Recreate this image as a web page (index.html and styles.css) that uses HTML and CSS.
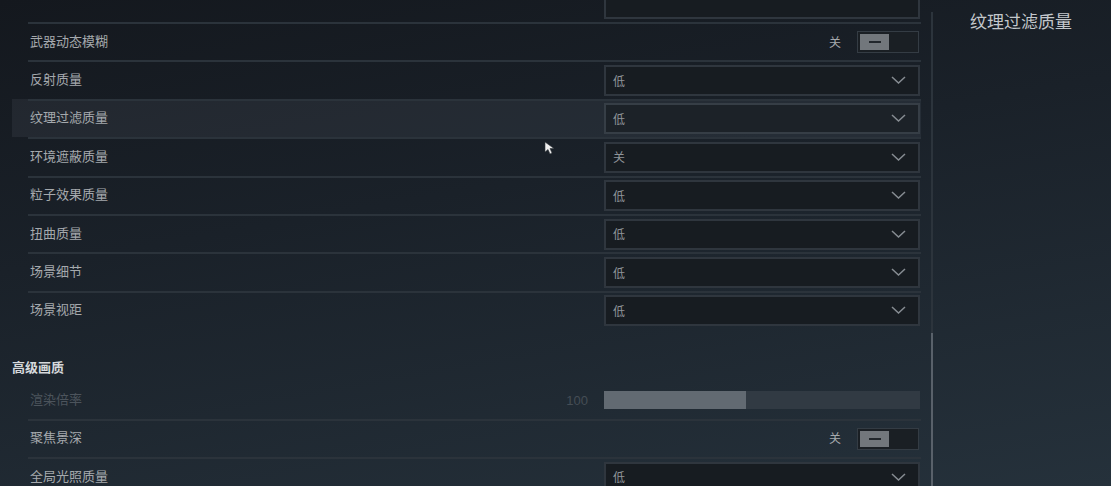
FILE: index.html
```html
<!DOCTYPE html>
<html lang="zh-CN">
<head>
    <meta charset="UTF-8">
    <title>画质设置</title>
    <link rel="stylesheet" href="styles.css">
</head>
<body>
    <div class="page">
        <div class="settings">
            <div class="list">
                <div class="row"><div class="row-inner"><span class="label"></span>
                    <div class="select"></div>
                </div></div>

                <div class="row"><div class="row-inner"><span class="label">武器动态模糊</span>
                    <div class="switch-wrap"><span class="switch-text">关</span><div class="switch"><div class="knob"><i></i></div></div></div>
                </div></div>

                <div class="row"><div class="row-inner"><span class="label">反射质量</span>
                    <div class="select"><span>低</span><svg class="chev" width="15" height="8" viewBox="0 0 15 8"><polyline points="1,1 7.5,7 14,1"/></svg></div>
                </div></div>

                <div class="row active"><div class="row-inner"><span class="label">纹理过滤质量</span>
                    <div class="select"><span>低</span><svg class="chev" width="15" height="8" viewBox="0 0 15 8"><polyline points="1,1 7.5,7 14,1"/></svg></div>
                </div></div>

                <div class="row"><div class="row-inner"><span class="label">环境遮蔽质量</span>
                    <div class="select"><span>关</span><svg class="chev" width="15" height="8" viewBox="0 0 15 8"><polyline points="1,1 7.5,7 14,1"/></svg></div>
                </div></div>

                <div class="row"><div class="row-inner"><span class="label">粒子效果质量</span>
                    <div class="select"><span>低</span><svg class="chev" width="15" height="8" viewBox="0 0 15 8"><polyline points="1,1 7.5,7 14,1"/></svg></div>
                </div></div>

                <div class="row"><div class="row-inner"><span class="label">扭曲质量</span>
                    <div class="select"><span>低</span><svg class="chev" width="15" height="8" viewBox="0 0 15 8"><polyline points="1,1 7.5,7 14,1"/></svg></div>
                </div></div>

                <div class="row"><div class="row-inner"><span class="label">场景细节</span>
                    <div class="select"><span>低</span><svg class="chev" width="15" height="8" viewBox="0 0 15 8"><polyline points="1,1 7.5,7 14,1"/></svg></div>
                </div></div>

                <div class="row"><div class="row-inner"><span class="label">场景视距</span>
                    <div class="select"><span>低</span><svg class="chev" width="15" height="8" viewBox="0 0 15 8"><polyline points="1,1 7.5,7 14,1"/></svg></div>
                </div></div>
            </div>

            <h2 class="section">高级画质</h2>

            <div class="list">
                <div class="row disabled"><div class="row-inner no-line"><span class="label">渲染倍率</span>
                    <div class="slider-wrap"><span class="slider-value">100</span><div class="slider"><div class="slider-fill" style="width: 45%"></div></div></div>
                </div></div>

                <div class="row"><div class="row-inner"><span class="label">聚焦景深</span>
                    <div class="switch-wrap"><span class="switch-text">关</span><div class="switch"><div class="knob"><i></i></div></div></div>
                </div></div>

                <div class="row"><div class="row-inner"><span class="label">全局光照质量</span>
                    <div class="select"><span>低</span><svg class="chev" width="15" height="8" viewBox="0 0 15 8"><polyline points="1,1 7.5,7 14,1"/></svg></div>
                </div></div>
            </div>
        </div>

        <div class="scrollbar"><div class="scroll-track"></div><div class="scroll-thumb"></div></div>

        <div class="detail">
            <h1 class="detail-title">纹理过滤质量</h1>
        </div>
    </div>

    <svg class="cursor" width="12" height="14" viewBox="0 0 12 14"><polygon points="1,1 1,11 4,8.5 6,13 8,12 6,7.5 10,7.5"/></svg>
</body>
</html>
```

FILE: styles.css
```css
body, html {
    margin: 0;
    padding: 0;
    width: 100%;
    height: 100%;
    overflow: hidden;
}
body {
    background: linear-gradient(170deg, #14181e 0%, #1a2129 40%, #25313b 100%);
    font-family: "Noto Sans CJK SC", sans-serif;
    color: #a9adb1;
}
.page {
    display: flex;
    height: 486px;
    overflow: hidden;
}

/* 左侧设置列表 */
.settings {
    width: 921px;
    padding-left: 12px;
    box-sizing: border-box;
    flex-shrink: 0;
}
.settings > .list:first-child {
    margin-top: -16.4px;
}
.row {
    display: flex;
    height: 38.4px;
    padding-left: 16px;
}
.row.active {
    background: rgba(120, 135, 150, 0.12);
}
.row-inner {
    flex: 1;
    display: flex;
    align-items: center;
    justify-content: space-between;
    border-top: 2px solid #2b333b;
    padding-left: 2px;
    box-sizing: border-box;
}
.row-inner.no-line {
    border-top-color: transparent;
}
.label {
    font-size: 13px;
    color: #a5a9ad;
    padding-bottom: 4px;
}
.row.disabled .label {
    color: #4c545c;
}

/* 下拉框 */
.select {
    width: 316px;
    height: 31px;
    margin-right: 1px;
    box-sizing: border-box;
    border: 2px solid #2f363e;
    background: #171c21;
    display: flex;
    align-items: center;
    justify-content: space-between;
    padding: 0 12px 1px 7px;
    font-size: 12px;
    color: #8f9499;
}
.row.active .select {
    background: #1c2228;
    border-color: #363e46;
}
.chev polyline {
    fill: none;
    stroke: #868c92;
    stroke-width: 1.5;
}

/* 开关 */
.switch-wrap {
    display: flex;
    align-items: center;
    gap: 16px;
    margin-right: 2px;
}
.switch-text {
    font-size: 12px;
    color: #a5a9ad;
    padding-bottom: 2px;
}
.switch {
    width: 62px;
    height: 22px;
    box-sizing: border-box;
    border: 1px solid #343c44;
    background: #1a1f24;
    padding: 2px;
    display: flex;
}
.knob {
    width: 29px;
    background: #72777c;
    display: flex;
    align-items: center;
    justify-content: center;
}
.knob i {
    width: 12px;
    height: 2px;
    background: #22272c;
}

/* 滑块 */
.slider-wrap {
    display: flex;
    align-items: center;
    gap: 16px;
    margin-right: 1px;
}
.slider-value {
    font-family: "Liberation Sans", sans-serif;
    font-size: 13px;
    color: #454d55;
}
.slider {
    width: 316px;
    height: 18px;
    background: #313a43;
    display: flex;
}
.slider-fill {
    background: #626a72;
}

.section {
    margin: 0;
    padding-top: 27px;
    height: 51px;
    box-sizing: border-box;
    font-size: 13px;
    font-weight: bold;
    line-height: 22px;
    color: #d6d9dc;
}

/* 滚动条 */
.scrollbar {
    margin-left: 10px;
    margin-top: 12px;
    width: 2px;
    display: flex;
    flex-direction: column;
    flex-shrink: 0;
}
.scroll-track {
    height: 321px;
    background: #2c343c;
}
.scroll-thumb {
    flex: 1;
    background: #59616a;
}

/* 右侧说明 */
.detail {
    flex: 1;
    padding-left: 37px;
    padding-top: 9px;
}
.detail-title {
    margin: 0;
    font-size: 17px;
    font-weight: normal;
    line-height: 24px;
    color: #c3c7cb;
}

.cursor {
    position: absolute;
    left: 544px;
    top: 141px;
}
.cursor polygon {
    fill: #f0f0f0;
    stroke: #30353a;
    stroke-width: 0.6;
}
```
